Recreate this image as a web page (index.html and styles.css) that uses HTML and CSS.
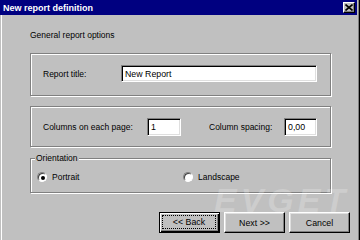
FILE: index.html
```html
<!DOCTYPE html>
<html>
<head>
<meta charset="utf-8">
<link rel="stylesheet" href="styles.css">
</head>
<body>
<div class="window">
  <div class="titlebar">
    <span class="title">New report definition</span>
    <span class="close"><svg width="8" height="7" viewBox="0 0 8 7"><path d="M0.5 0.5 L7.5 6.5 M7.5 0.5 L0.5 6.5" stroke="#000" stroke-width="1.6" fill="none"/></svg></span>
  </div>
  <div class="client">
    <div class="heading">General report options</div>
    <div class="group g1">
      <span class="lbl l-title">Report title:</span>
      <span class="field f-title">New Report</span>
    </div>
    <div class="group g2">
      <span class="lbl l-cols">Columns on each page:</span>
      <span class="field f-cols">1</span>
      <span class="lbl l-space">Column spacing:</span>
      <span class="field f-space">0,00</span>
    </div>
    <div class="group g3">
      <span class="legend">Orientation</span>
      <div class="radios">
        <span class="radio"><span class="dot on"></span>Portrait</span>
        <span class="radio"><span class="dot"></span>Landscape</span>
      </div>
    </div>
    <div class="buttons">
      <span class="btn default"><span class="focus">&lt;&lt; Back</span></span>
      <span class="btn">Next &gt;&gt;</span>
      <span class="btn">Cancel</span>
    </div>
  </div>
  <div class="watermark">EVGET</div>
</div>
</body>
</html>
```
FILE: styles.css
```css
html, body {
  margin: 0;
  padding: 0;
}
body {
  width: 360px;
  height: 240px;
  overflow: hidden;
  background: #c0c0c0;
  font-family: "Liberation Sans", Arial, sans-serif;
  font-size: 8.5px;
  color: #000;
}
.window {
  position: relative;
  width: 360px;
  height: 240px;
  box-sizing: border-box;
  background: #c0c0c0;
  box-shadow: inset -1px 0 0 #000, inset -2px 0 0 #808080;
  display: flex;
  flex-direction: column;
}
.titlebar {
  height: 15px;
  margin-right: 3px;
  background: #000080;
  color: #fff;
  font-weight: bold;
  font-size: 9px;
  display: flex;
  align-items: center;
  justify-content: space-between;
  padding: 0 2px 0 3px;
}
.title {
  line-height: 15px;
  padding-top: 1px;
}
.close {
  width: 12px;
  height: 11px;
  box-sizing: border-box;
  background: #c0c0c0;
  border: 1px solid;
  border-color: #fff #000 #000 #fff;
  box-shadow: inset -1px -1px 0 #808080;
  display: flex;
  align-items: center;
  justify-content: center;
}
.close svg {
  display: block;
}
.client {
  flex: 1;
  padding-left: 30px;
  box-shadow: inset 1px 0 0 #c0c0c0, inset 2px 0 0 #fff;
}
.heading {
  margin-top: 14px;
  line-height: 12px;
  height: 12px;
}
.group {
  width: 301px;
  box-sizing: border-box;
  border: 1px solid #808080;
  box-shadow: 1px 1px 0 #fff, inset 1px 1px 0 #fff;
  display: flex;
  align-items: center;
  padding-left: 12px;
}
.g1 {
  margin-top: 12px;
  height: 43px;
  padding-bottom: 2px;
}
.g2 {
  margin-top: 10px;
  height: 41px;
}
.g3 {
  position: relative;
  margin-top: 11px;
  height: 35px;
  padding-top: 3px;
  padding-left: 6px;
}
.lbl {
  white-space: nowrap;
}
.l-title { width: 78px; }
.l-cols { width: 104px; }
.l-space { width: 75px; margin-left: 28px; }
.field {
  box-sizing: border-box;
  height: 17px;
  background: #fff;
  border: 1px solid;
  border-color: #808080 #fff #fff #808080;
  box-shadow: inset 1px 1px 0 #000, inset -1px -1px 0 #dfdfdf;
  padding: 1px 0 0 3px;
  line-height: 14px;
  font-size: 8.8px;
}
.f-title { width: 196px; }
.f-cols { width: 34px; height: 18px; }
.f-space { width: 33px; height: 18px; }
.legend {
  position: absolute;
  left: 4px;
  top: -7px;
  padding: 0 1px;
  background: #c0c0c0;
  line-height: 12px;
}
.radios {
  display: grid;
  grid-template-columns: 146px auto;
}
.radio {
  display: flex;
  align-items: center;
  gap: 5px;
}
.dot {
  width: 10px;
  height: 10px;
  box-sizing: border-box;
  border-radius: 50%;
  background: #fff;
  border: 1px solid;
  border-color: #808080 #fff #fff #808080;
  box-shadow: inset 1px 1px 0 #404040;
  position: relative;
}
.dot.on::after {
  content: "";
  position: absolute;
  left: 2.5px;
  top: 2.5px;
  width: 4px;
  height: 4px;
  border-radius: 50%;
  background: #000;
}
.buttons {
  margin-top: 19px;
  padding-left: 129px;
  display: flex;
  gap: 4px;
}
.btn {
  width: 61px;
  height: 21px;
  box-sizing: border-box;
  border: 1px solid;
  border-color: #fff #000 #000 #fff;
  box-shadow: inset -1px -1px 0 #808080, inset 1px 1px 0 #dfdfdf;
  display: flex;
  align-items: center;
  justify-content: center;
  font-size: 8.8px;
}
.btn.default {
  border-color: #000;
  box-shadow: inset 1px 1px 0 #fff, inset -1px -1px 0 #000, inset -2px -2px 0 #808080;
  padding: 2px 3px 3px 2px;
}
.focus {
  flex: 1;
  align-self: stretch;
  border: 1px dotted #000;
  display: flex;
  align-items: center;
  justify-content: center;
}
.watermark {
  position: absolute;
  left: 214px;
  top: 183px;
  font-family: "Liberation Sans", Arial, sans-serif;
  font-style: italic;
  font-weight: bold;
  font-size: 34px;
  line-height: 34px;
  letter-spacing: 4px;
  color: rgba(255, 255, 255, 0.22);
  pointer-events: none;
}
```
